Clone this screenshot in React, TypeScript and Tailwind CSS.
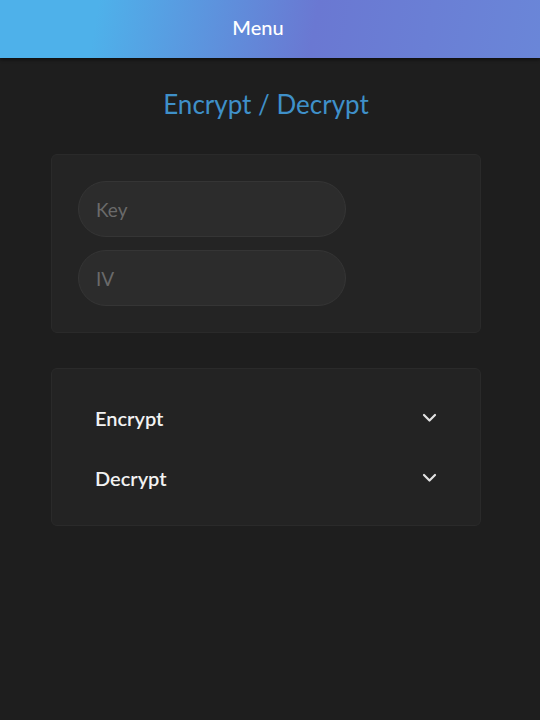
import React from 'react';

const font = { fontFamily: '"Segoe UI", Lato, "Noto Sans", sans-serif' };

function Chevron() {
  return (
    <svg width="15" height="10" viewBox="0 0 15 10" fill="none" className="text-[#e2e2e2]">
      <polyline points="2,2 7.5,7.5 13,2" stroke="currentColor" strokeWidth="2.2" strokeLinecap="round" strokeLinejoin="round" />
    </svg>
  );
}

export default function App() {
  const sections = ['Encrypt', 'Decrypt'];

  return (
    <div className="min-h-[720px] w-full bg-[#1e1e1e]" style={font}>
      <header className="relative flex h-[58px] items-center justify-center pr-6 pb-1 bg-[linear-gradient(100deg,#4eb1ea_18%,#6a78d2_58%,#6a86d8_100%)] shadow-[0_2px_3px_rgba(0,0,0,0.45)]">
        <span className="text-[20px] font-medium text-white">Menu</span>
      </header>

      <main className="flex flex-col items-center pt-[28px] pr-2">
        <h1 className="h-9 text-[26px] leading-9 text-[#3f90c9]">Encrypt / Decrypt</h1>

        <section className="mt-[32px] flex w-[430px] flex-col gap-[13px] rounded-md border border-[#2a2a2a] bg-[#242424] p-[26px]">
          <input
            placeholder="Key"
            className="h-[56px] w-[268px] rounded-full border border-[#353535] bg-[#2c2c2c] px-[17px] text-[19px] text-white placeholder:text-[#6a6a6a] outline-none"
          />
          <input
            placeholder="IV"
            className="h-[56px] w-[268px] rounded-full border border-[#353535] bg-[#2c2c2c] px-[17px] text-[19px] text-white placeholder:text-[#6a6a6a] outline-none"
          />
        </section>

        <section className="mt-[35px] flex w-[430px] flex-col rounded-md border border-[#2a2a2a] bg-[#232323] px-[43px] pt-[19px] pb-[17px]">
          {sections.map((s) => (
            <button key={s} type="button" className="flex h-[60px] items-center justify-between text-left">
              <span className="text-[20px] font-semibold text-[#f2f2f2]">{s}</span>
              <Chevron />
            </button>
          ))}
        </section>
      </main>
    </div>
  );
}
